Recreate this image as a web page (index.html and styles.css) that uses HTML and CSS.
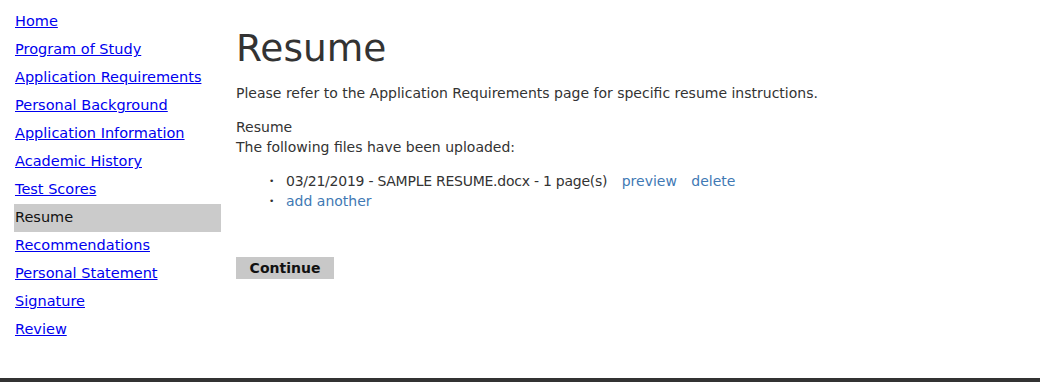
FILE: index.html
```html
<!DOCTYPE html>
<html lang="en">
<head>
    <meta charset="UTF-8">
    <title>Resume</title>
    <link rel="stylesheet" href="styles.css">
</head>
<body>
    <div class="page">
        <nav class="side-nav">
            <a href="#">Home</a>
            <a href="#">Program of Study</a>
            <a href="#">Application Requirements</a>
            <a href="#">Personal Background</a>
            <a href="#">Application Information</a>
            <a href="#">Academic History</a>
            <a href="#">Test Scores</a>
            <span class="current">Resume</span>
            <a href="#">Recommendations</a>
            <a href="#">Personal Statement</a>
            <a href="#">Signature</a>
            <a href="#">Review</a>
        </nav>

        <main class="content">
            <h1>Resume</h1>
            <p class="intro">Please refer to the Application Requirements page for specific resume instructions.</p>

            <div class="field-label">Resume</div>
            <div class="field-note">The following files have been uploaded:</div>

            <ul class="file-list">
                <li><span class="file-name">03/21/2019 - SAMPLE RESUME.docx - 1 page(s)</span> <a href="#" class="action">preview</a> <a href="#" class="action">delete</a></li>
                <li><a href="#">add another</a></li>
            </ul>

            <button class="continue-btn">Continue</button>
        </main>
    </div>
    <footer class="site-footer"></footer>
</body>
</html>
```

FILE: styles.css
```css
html, body { margin: 0; padding: 0; }
body { font-family: 'DejaVu Sans', sans-serif; font-size: 14px; color: #333; background: #fff; height: 382px; position: relative; }
.page { display: flex; padding: 8px 0 0 14px; }
.side-nav { width: 207px; flex-shrink: 0; display: flex; flex-direction: column; font-size: 14.5px; }
.side-nav a, .side-nav .current { display: block; height: 28px; line-height: 26px; padding-left: 1px; color: #0000ee; white-space: nowrap; }
.side-nav .current { background: #cbcbcb; color: #111; }
.content { padding-left: 15px; }
.content h1 { font-size: 37.5px; font-weight: 400; margin: 18px 0 0; line-height: 44px; color: #333; }
.intro { margin: 13px 0 0; line-height: 20px; }
.field-label { margin-top: 14px; line-height: 20px; }
.field-note { line-height: 20px; }
.file-list { margin: 14px 0 0; padding-left: 50px; list-style: none; }
.file-list li { line-height: 20px; position: relative; }
.file-list li::before { content: "\2022"; position: absolute; left: -17px; font-size: 9px; }
.file-list .file-name { letter-spacing: -0.25px; }
.file-list a { color: #3f79b4; text-decoration: none; }
.file-list .action { margin-left: 10px; }
.continue-btn { margin-top: 46px; display: block; width: 98px; height: 22px; border: none; background: #c8c8c8; font-family: inherit; font-size: 14px; font-weight: 700; color: #111; padding: 0; }
.site-footer { position: absolute; left: 0; right: 0; bottom: 0; height: 4px; background: #333; }
```
